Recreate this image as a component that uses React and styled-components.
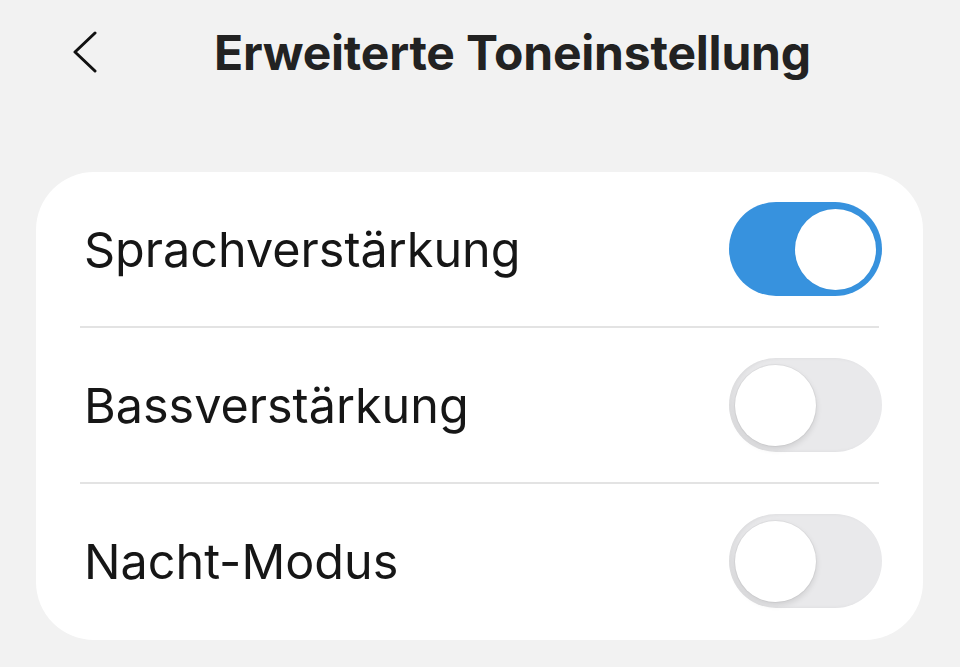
import React, { useState } from "react";
import styled, { createGlobalStyle } from "styled-components";

const Global = createGlobalStyle`
  html, body {
    margin: 0;
    padding: 0;
    background: #f2f2f2;
  }
  body {
    font-family: Inter, "Noto Sans", "Liberation Sans", sans-serif;
    -webkit-font-smoothing: antialiased;
  }
`;

const Page = styled.div`
  width: 960px;
  height: 667px;
  background: #f2f2f2;
  display: flex;
  flex-direction: column;
  box-sizing: border-box;
  padding: 0 37px 0 36px;
`;

const Header = styled.header`
  height: 104px;
  display: flex;
  align-items: center;
`;

const BackButton = styled.button`
  width: 60px;
  height: 60px;
  margin-left: 36px;
  padding: 0;
  border: 0;
  background: transparent;
  display: flex;
  align-items: center;
  justify-content: flex-start;
  cursor: pointer;
`;

const Title = styled.h1`
  margin: 0 0 0 82px;
  font-size: 48px;
  font-weight: 700;
  color: #222222;
  letter-spacing: -0.2px;
`;

const Card = styled.section`
  margin-top: 68px;
  background: #ffffff;
  border-radius: 58px;
  padding: 0 44px 2px 44px;
`;

const Row = styled.div`
  height: 154px;
  display: flex;
  align-items: center;
  justify-content: space-between;
  & + & {
    border-top: 2px solid #e3e3e3;
  }
`;

const Label = styled.span`
  font-size: 48.5px;
  font-weight: 400;
  color: #161616;
  padding-left: 4px;
`;

const Track = styled.button`
  width: 153px;
  height: 94px;
  margin-right: -3px;
  border: 0;
  padding: 0 6px;
  border-radius: 47px;
  display: flex;
  align-items: center;
  justify-content: ${(p) => (p.$on ? "flex-end" : "flex-start")};
  background: ${(p) => (p.$on ? "#3792de" : "#e9e9eb")};
  box-shadow: ${(p) =>
    p.$on ? "none" : "inset 3px 0 4px rgba(0, 0, 0, 0.06)"};
  cursor: pointer;
`;

const Thumb = styled.span`
  width: 81px;
  height: 81px;
  border-radius: 50%;
  background: #ffffff;
  box-shadow: ${(p) =>
    p.$on
      ? "0 0 0 1px rgba(0, 0, 0, 0.02)"
      : "0 3px 6px rgba(0, 0, 0, 0.12), 0 0 0 1px rgba(0, 0, 0, 0.04)"};
`;

const Toggle = ({ on, onChange }) => (
  <Track $on={on} onClick={onChange} aria-pressed={on}>
    <Thumb $on={on} />
  </Track>
);

const Chevron = () => (
  <svg width="26" height="42" viewBox="0 0 26 42" fill="none">
    <path
      d="M23 2 L3 21 L23 40"
      stroke="#111111"
      strokeWidth="3"
      strokeLinecap="round"
      strokeLinejoin="round"
    />
  </svg>
);

const settings = [
  { id: "speech", label: "Sprachverstärkung", on: true },
  { id: "bass", label: "Bassverstärkung", on: false },
  { id: "night", label: "Nacht-Modus", on: false },
];

export default function App() {
  const [state, setState] = useState(
    Object.fromEntries(settings.map((s) => [s.id, s.on]))
  );

  return (
    <>
      <Global />
      <Page>
        <Header>
          <BackButton aria-label="Zurück">
            <Chevron />
          </BackButton>
          <Title>Erweiterte Toneinstellung</Title>
        </Header>
        <Card>
          {settings.map((s) => (
            <Row key={s.id}>
              <Label>{s.label}</Label>
              <Toggle
                on={state[s.id]}
                onChange={() => setState({ ...state, [s.id]: !state[s.id] })}
              />
            </Row>
          ))}
        </Card>
      </Page>
    </>
  );
}
